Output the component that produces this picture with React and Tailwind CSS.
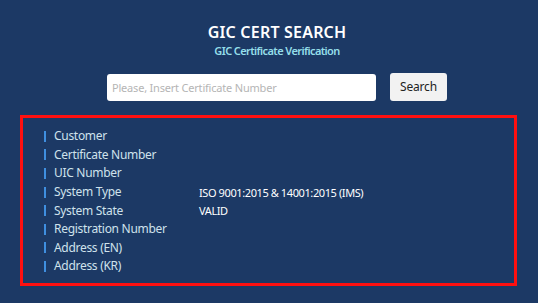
const rows = [
  { label: "Customer", value: "" },
  { label: "Certificate Number", value: "" },
  { label: "UIC Number", value: "" },
  { label: "System Type", value: "ISO 9001:2015 & 14001:2015 (IMS)" },
  { label: "System State", value: "VALID" },
  { label: "Registration Number", value: "" },
  { label: "Address (EN)", value: "" },
  { label: "Address (KR)", value: "" },
];

export default function App() {
  return (
    <div className="w-[538px] h-[303px] overflow-hidden bg-[#1c3965] font-['Noto_Sans',sans-serif]">
      {/* Header */}
      <div className="flex flex-col items-center pt-[21px] pl-[16px]">
        <h1 className="text-[16px] leading-[23px] font-semibold text-white tracking-[0.2px]">GIC CERT SEARCH</h1>
        <p className="text-[11px] leading-[14px] font-semibold text-[#95dfea] tracking-[-0.6px]">
          GIC Certificate Verification
        </p>
      </div>

      {/* Search bar */}
      <div className="flex items-center pl-[107px] mt-[15px] gap-[14px]">
        <input
          className="w-[269px] h-[27px] rounded-[3px] bg-white px-[5px] text-[11px] text-gray-700 placeholder:text-[#b5b5b5] outline-none tracking-[-0.2px]"
          placeholder="Please, Insert Certificate Number"
        />
        <button className="w-[57px] h-[28px] rounded-[3px] bg-[#f2f2f2] text-[12px] text-[#222] tracking-[-0.2px]">
          Search
        </button>
      </div>

      {/* Result box */}
      <div className="ml-[20px] mt-[14px] w-[497px] h-[171px] border-[3px] border-[#ff1010] pt-[9px] pl-[21px]">
        {rows.map((r) => (
          <div key={r.label} className="flex items-center h-[18.6px]">
            <span className="w-[2px] h-[11px] bg-[#3f8fe0] mr-[8px]" />
            <span className="w-[145px] text-[12px] text-[#cfe2ec] tracking-[-0.3px] leading-none">{r.label}</span>
            <span className="text-[11px] text-white tracking-[-0.4px] leading-none">{r.value}</span>
          </div>
        ))}
      </div>
    </div>
  );
}
